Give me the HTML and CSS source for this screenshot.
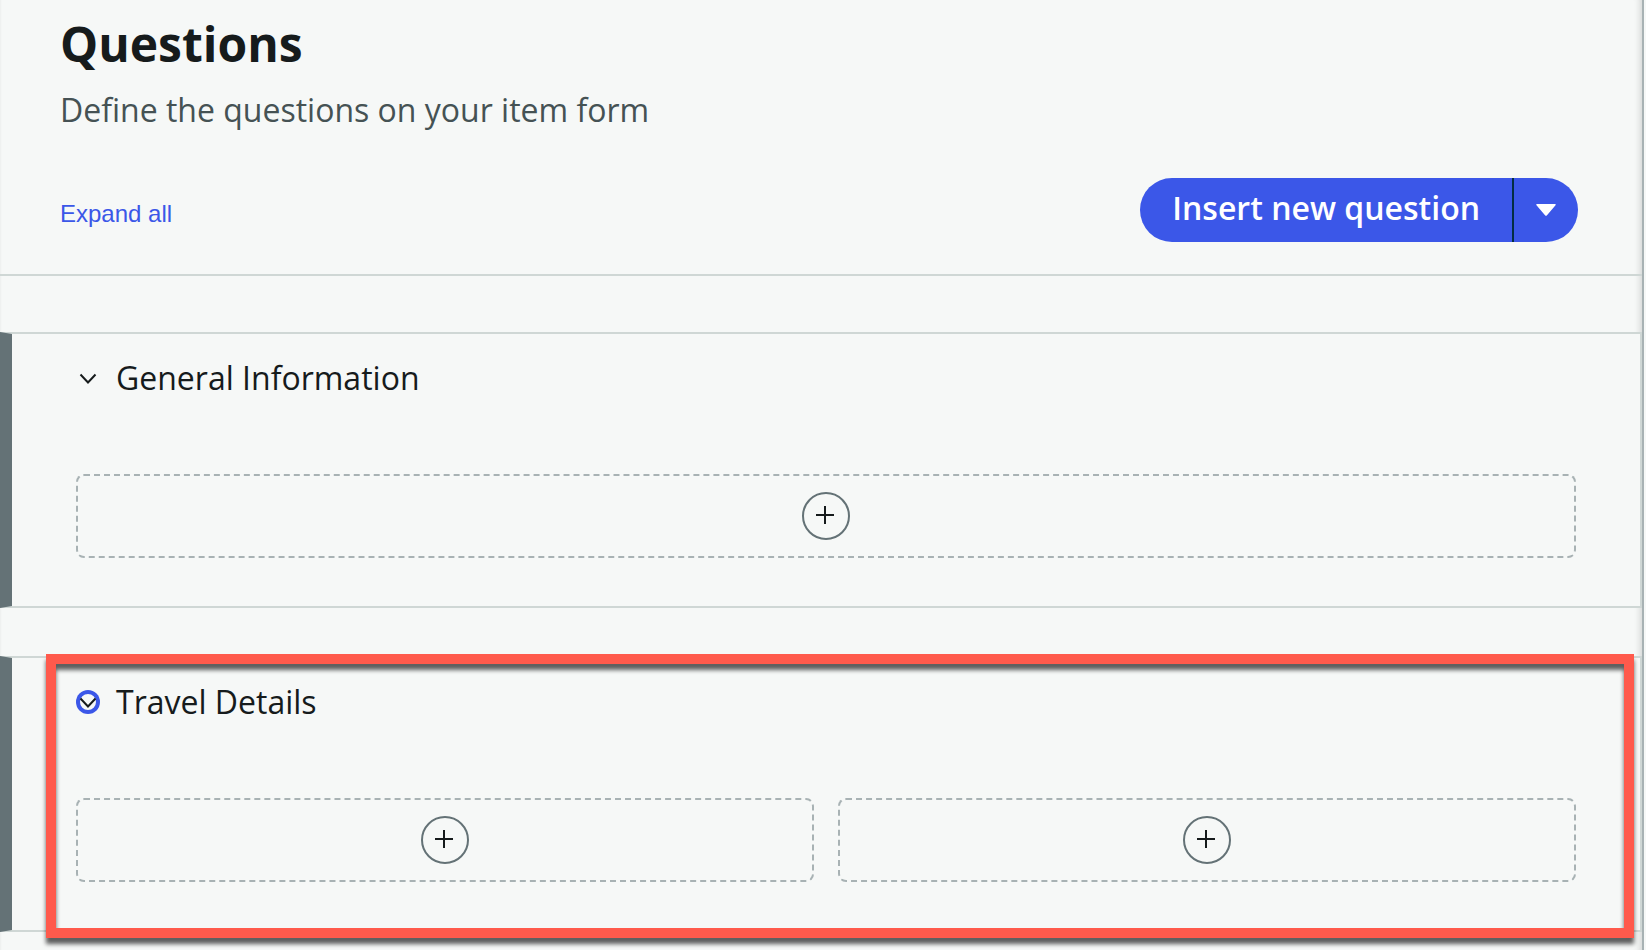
FILE: index.html
```html
<!DOCTYPE html>
<html lang="en">
<head>
<meta charset="utf-8">
<title>Questions</title>
<link rel="stylesheet" href="styles.css">
</head>
<body>
<main class="panel">
  <header class="panel-header">
    <h1 class="title">Questions</h1>
    <p class="subtitle">Define the questions on your item form</p>
    <div class="toolbar">
      <a class="expand-link" href="#">Expand all</a>
      <div class="split-button">
        <button class="split-main" type="button">Insert new question</button>
        <button class="split-toggle" type="button" aria-label="More insert options">
          <svg class="caret" viewBox="0 0 20 12" aria-hidden="true"><path d="M1 0H19Q20.500 0 19.500 1.200L11 11.200Q10 12.400 9 11.200L.5 1.200Q-.5 0 1 0Z"/></svg>
        </button>
      </div>
    </div>
  </header>
  <div class="sections">
    <section class="section">
      <div class="section-head">
        <button class="chevron" type="button" aria-label="Collapse General Information">
          <svg class="chevron-icon" viewBox="0 0 24 24" aria-hidden="true"><path d="M4.500 8.500 12 16.500 19.500 8.500"/></svg>
        </button>
        <h2 class="section-title">General Information</h2>
      </div>
      <div class="slots">
        <div class="slot">
          <button class="add" type="button" aria-label="Add question">
            <svg class="add-icon" viewBox="0 0 44 44" aria-hidden="true"><path d="M21 12v18M12 21h18"/></svg>
          </button>
        </div>
      </div>
    </section>
    <section class="section">
      <div class="section-head">
        <button class="chevron chevron-focused" type="button" aria-label="Collapse Travel Details">
          <svg class="chevron-icon" viewBox="0 0 24 24" aria-hidden="true"><path d="M4.500 8.500 12 16.500 19.500 8.500"/></svg>
        </button>
        <h2 class="section-title">Travel Details</h2>
      </div>
      <div class="slots">
        <div class="slot">
          <button class="add" type="button" aria-label="Add question to left column">
            <svg class="add-icon" viewBox="0 0 44 44" aria-hidden="true"><path d="M21 12v18M12 21h18"/></svg>
          </button>
        </div>
        <div class="slot">
          <button class="add" type="button" aria-label="Add question to right column">
            <svg class="add-icon" viewBox="0 0 44 44" aria-hidden="true"><path d="M21 12v18M12 21h18"/></svg>
          </button>
        </div>
      </div>
      <div class="highlight" aria-hidden="true"></div>
    </section>
  </div>
</main>
</body>
</html>
```
FILE: styles.css
```css
* {
  box-sizing: border-box;
}

body {
  margin: 0;
  background: #f6f8f7;
  color: #161b1c;
  font-family: "Open Sans", "Noto Sans", sans-serif;
}

button {
  margin: 0;
  padding: 0;
  border: 0;
  background: none;
  color: inherit;
  font: inherit;
  cursor: pointer;
}

.panel {
  min-height: 100vh;
  margin-right: 2px;
  border-right: 2px solid #a8b2b4;
  box-shadow: inset -8px 0 6px -6px rgba(0, 0, 0, 0.14), inset 4px 0 3px -4px rgba(0, 0, 0, 0.08);
}

.panel-header {
  padding: 12px 64px 32px 60px;
  border-bottom: 2px solid #cfd7d5;
}

.title {
  margin: 0;
  font-size: 48px;
  line-height: 64px;
  font-weight: 700;
}

.subtitle {
  margin: 10px 0 44px;
  color: #455254;
  font-size: 32px;
  line-height: 48px;
}

.toolbar {
  display: flex;
  justify-content: space-between;
  align-items: flex-end;
}

.expand-link {
  color: #3b57e8;
  font-family: "Liberation Sans", Arial, sans-serif;
  font-size: 24px;
  line-height: 56px;
  text-decoration: none;
}

.split-button {
  display: flex;
  height: 64px;
  border-radius: 32px;
  overflow: hidden;
  background: #3b57e8;
  color: #fff;
}

.split-main {
  padding: 0 32px 4px;
  font-size: 32px;
  line-height: 48px;
  font-weight: 600;
}

.split-toggle {
  display: flex;
  align-items: center;
  padding: 0 22px;
  border-left: 2px solid #032d42;
}

.caret {
  width: 20px;
  height: 12px;
  fill: #fff;
}

.sections {
  display: grid;
  gap: 48px;
  padding-top: 56px;
}

.section {
  position: relative;
  padding: 20px 64px 48px;
  border: 2px solid #cfd7d5;
  border-left: 12px solid #647276;
  background: #f6f8f7;
}

.section-head {
  display: flex;
  align-items: center;
  gap: 16px;
  margin-bottom: 72px;
}

.section-title {
  margin: 0;
  font-size: 32px;
  line-height: 48px;
  font-weight: 400;
}

.chevron {
  width: 24px;
  height: 24px;
  border-radius: 50%;
}

.chevron-focused {
  box-shadow: inset 0 0 0 4px #3b57e8;
}

.chevron-icon {
  display: block;
  width: 24px;
  height: 24px;
  fill: none;
  stroke: #161b1c;
  stroke-width: 2;
}

.slots {
  display: grid;
  grid-auto-flow: column;
  grid-auto-columns: 1fr;
  gap: 24px;
}

.slot {
  display: flex;
  justify-content: center;
  padding: 16px;
  border: 2px dashed #a8b2b4;
  border-radius: 8px;
}

.add {
  width: 48px;
  height: 48px;
  border: 2px solid #647276;
  border-radius: 50%;
}

.add-icon {
  display: block;
  width: 44px;
  height: 44px;
  fill: none;
  stroke: #161b1c;
  stroke-width: 2;
}

.highlight {
  position: absolute;
  inset: -4px 6px -8px 34px;
  border: 10px solid #ff5a4c;
  filter: drop-shadow(0 6px 2px rgba(0, 0, 0, 0.62));
  pointer-events: none;
}
```
